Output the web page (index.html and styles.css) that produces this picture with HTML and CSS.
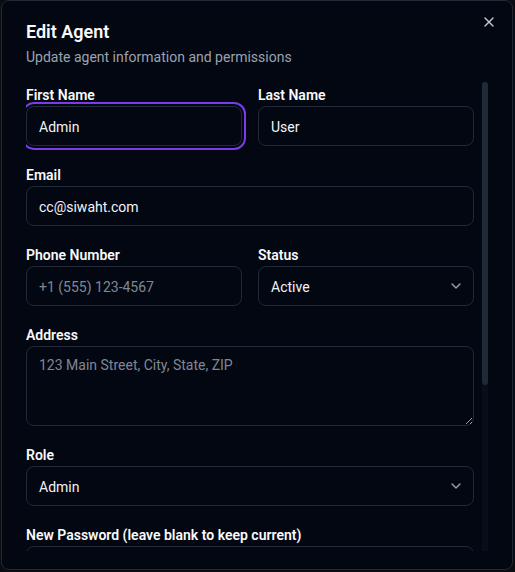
FILE: index.html
```html
<!DOCTYPE html>
<html lang="en">
<head>
<meta charset="utf-8">
<title>Edit Agent</title>
<link rel="stylesheet" href="styles.css">
</head>
<body>
<div class="dialog" role="dialog">
  <button class="close" aria-label="Close">
    <svg width="16" height="16" viewBox="0 0 24 24" fill="none" stroke="currentColor" stroke-width="2" stroke-linecap="round" stroke-linejoin="round"><path d="M18 6 6 18"/><path d="m6 6 12 12"/></svg>
  </button>
  <div class="header">
    <h2 class="title">Edit Agent</h2>
    <p class="subtitle">Update agent information and permissions</p>
  </div>
  <div class="scroll">
    <div class="content">
      <div class="form">
        <div class="row">
          <div class="field">
            <label class="label">First Name</label>
            <input class="input focused" type="text" value="Admin">
          </div>
          <div class="field">
            <label class="label">Last Name</label>
            <input class="input" type="text" value="User">
          </div>
        </div>
        <div class="field">
          <label class="label">Email</label>
          <input class="input" type="email" value="cc@siwaht.com">
        </div>
        <div class="row">
          <div class="field">
            <label class="label">Phone Number</label>
            <input class="input" type="tel" placeholder="+1 (555) 123-4567">
          </div>
          <div class="field">
            <label class="label">Status</label>
            <div class="select">
              <span>Active</span>
              <svg class="chev" width="16" height="16" viewBox="0 0 24 24" fill="none" stroke="currentColor" stroke-width="2" stroke-linecap="round" stroke-linejoin="round"><path d="m6 9 6 6 6-6"/></svg>
            </div>
          </div>
        </div>
        <div class="field">
          <label class="label">Address</label>
          <textarea class="textarea" placeholder="123 Main Street, City, State, ZIP"></textarea>
        </div>
        <div class="field">
          <label class="label">Role</label>
          <div class="select">
            <span>Admin</span>
            <svg class="chev" width="16" height="16" viewBox="0 0 24 24" fill="none" stroke="currentColor" stroke-width="2" stroke-linecap="round" stroke-linejoin="round"><path d="m6 9 6 6 6-6"/></svg>
          </div>
        </div>
        <div class="field">
          <label class="label">New Password (leave blank to keep current)</label>
          <input class="input" type="password">
        </div>
      </div>
    </div>
    <div class="scrollbar"><div class="thumb"></div></div>
  </div>
</div>
</body>
</html>
```

FILE: styles.css
```css
* { box-sizing: border-box; }
html, body { margin: 0; padding: 0; }
body {
  background: #0b0c10;
  font-family: Roboto, "Noto Sans", sans-serif;
  color: #f9fafb;
  color-scheme: dark;
  height: 572px;
  overflow: hidden;
}
.dialog {
  position: relative;
  margin-left: 1px;
  width: 512px;
  height: 570px;
  border: 1px solid #1f2937;
  border-radius: 8px;
  background: #030712;
  padding: 21px 24px 18px 24px;
  display: flex;
  flex-direction: column;
}
.close {
  position: absolute;
  top: 13px;
  right: 15px;
  width: 16px;
  height: 16px;
  padding: 0;
  border: 0;
  background: none;
  color: #c4c8d0;
  display: flex;
}
.header { display: flex; flex-direction: column; gap: 5px; margin-bottom: 15px; }
.title { margin: 0; font-size: 18px; line-height: 20px; font-weight: 600; color: #f9fafb; }
.subtitle { margin: 0; font-size: 14px; line-height: 20px; color: #9ca3af; }
.scroll {
  flex: 1;
  min-height: 0;
  display: flex;
}
.content {
  flex: 1;
  min-width: 0;
  overflow: hidden;
  padding: 3px 8px 0 0;
}
.scrollbar {
  width: 6px;
  flex: none;
  background: #080d19;
  border-radius: 3px 3px 0 0;
}
.thumb { height: 303px; background: #1f2937; border-radius: 3px; }
.form { display: flex; flex-direction: column; gap: 19px; }
.row { display: grid; grid-template-columns: 1fr 1fr; gap: 16px; }
.field { display: flex; flex-direction: column; gap: 1px; }
.label { font-size: 14px; line-height: 20px; font-weight: 600; color: #f9fafb; }
.input, .select, .textarea {
  width: 100%;
  height: 40px;
  border: 1px solid #1f2937;
  border-radius: 8px;
  background: #030712;
  color: #f3f4f6;
  font-family: inherit;
  font-size: 14px;
  padding: 2px 12px 0;
  outline: none;
}
.input::placeholder, .textarea::placeholder { color: #7f8794; }
.focused { box-shadow: 0 0 0 2px #030712, 0 0 0 4px #7c3aed; }
.select { display: flex; align-items: center; justify-content: space-between; }
.chev { color: #9ca3af; margin-right: -3px; margin-top: -2px; }
.textarea {
  height: 80px;
  padding: 8px 12px;
  line-height: 20px;
  resize: vertical;
  display: block;
}
```
